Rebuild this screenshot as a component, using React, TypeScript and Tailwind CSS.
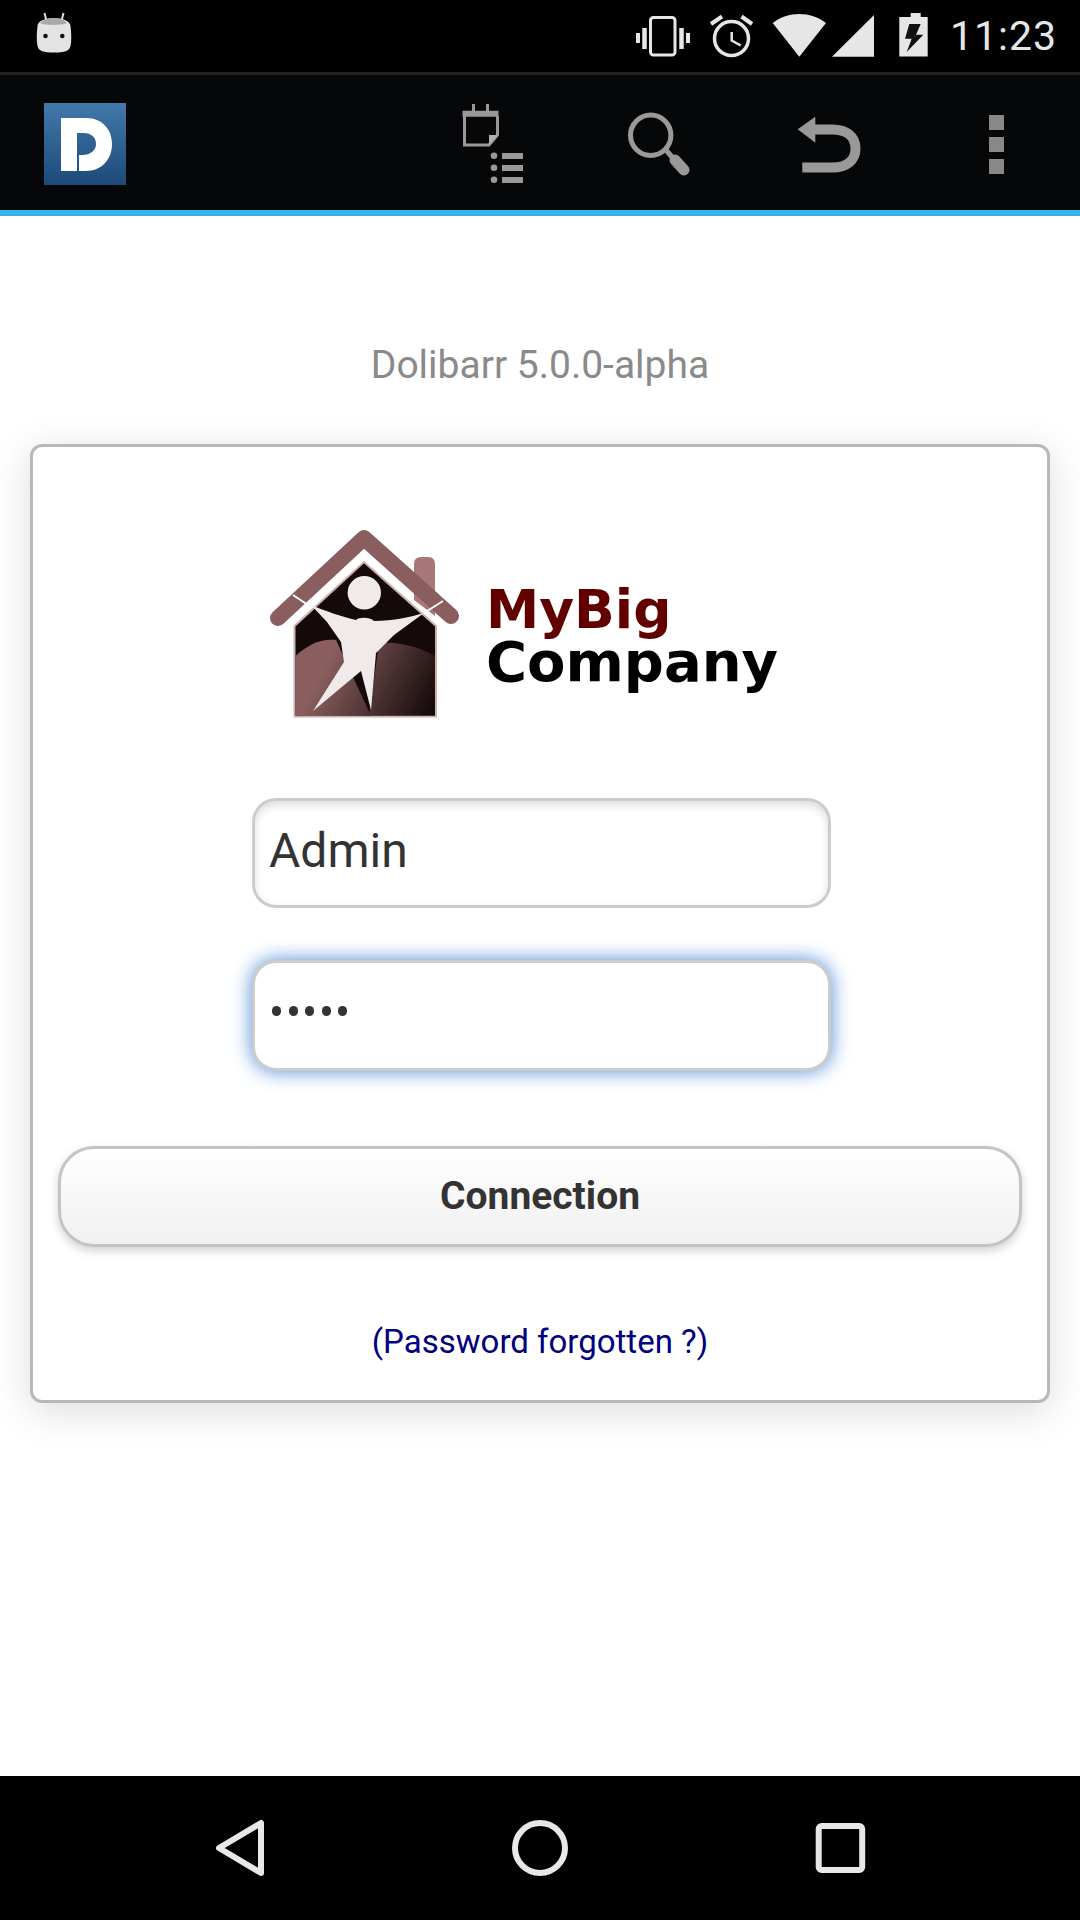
function StatusBar() {
  return (
    <div className="flex h-[72px] items-center bg-black pl-[36px] pr-[23px]">
      <svg width="40" height="56" viewBox="36 8 40 56" fill="none">
        <path d="M44.5 13l2 8M63.5 13l-2 8" stroke="#ddd" strokeWidth="2" />
        <path d="M37.5 26c0-5 8-8 16.500-8s16.500 3 16.500 8c1 8 1 15 0 20-1 5-6 6.500-16.500 6.500s-15.500-1.500-16.500-6.500c-1-5-1-12 0-20z" fill="#e3e3e3" />
        <path d="M40 23c3-3 8-5 13.500-5s11 2 13.500 5c-4 2.500-23 2.500-27 0z" fill="#a8a8a8" />
        <circle cx="45.500" cy="36" r="2.300" fill="#111" />
        <circle cx="62.300" cy="36" r="2.300" fill="#111" />
      </svg>
      <svg width="300" height="48" viewBox="630 12 300 48" fill="none" className="ml-auto">
        <rect x="650.500" y="17.500" width="24.500" height="37.500" rx="3" stroke="#e6e6e6" strokeWidth="3" />
        <path d="M644.500 28v21M681.500 28v21" stroke="#e6e6e6" strokeWidth="4.500" />
        <path d="M638 33v10M688 33v10" stroke="#e6e6e6" strokeWidth="4" />
        <circle cx="731.500" cy="38.500" r="17" stroke="#e6e6e6" strokeWidth="3.500" />
        <path d="M731.700 32v8.500l9 5" stroke="#e6e6e6" strokeWidth="2.500" />
        <path d="M711 24l11-7.500M752 24l-10.500-7.500" stroke="#e6e6e6" strokeWidth="4" />
        <path d="M772.700 23c15-12 38-12 53.300 0l-26.700 33.700z" fill="#e6e6e6" />
        <path d="M832 56.700l42-41.700v41.700z" fill="#e6e6e6" />
        <path d="M899.300 17h11.400v-4h10v4h7V56.500H899.300z" fill="#e6e6e6" />
        <path d="M909.300 24h11.400l-4.700 10.700h7.300L906.700 52l5-13.300H905z" fill="#111" />
      </svg>
      <span className="ml-[20px] text-[41px] leading-none tracking-[1px] text-[#e6e6e6]">11:23</span>
    </div>
  );
}

function ActionBar() {
  return (
    <div className="flex h-[138px] items-center border-t-[3px] border-[#222222] bg-[#050708] pl-[44px] pt-[3px]">
      <svg width="82" height="82" viewBox="0 0 82 82">
        <defs>
          <linearGradient id="dolibarr" x1="0" y1="0" x2="0" y2="1">
            <stop offset="0" stopColor="#4279ab" />
            <stop offset="1" stopColor="#1c4a78" />
          </linearGradient>
        </defs>
        <rect width="82" height="82" fill="url(#dolibarr)" />
        <path d="M17 15H42C58 15 68 26 68 41C68 57 57 68 42 68H35V52H38C47 52 52 47 52 41C52 34 47 30 40 30H33V68H17Z" fill="#ffffff" />
      </svg>
      <svg width="410" height="80" viewBox="455 104 410 80" fill="none" className="ml-[329px]">
        <path d="M473.500 111v-7M487.500 111v-7" stroke="#999" strokeWidth="3" />
        <path d="M462.500 110.700h36v6h-36z" fill="#999" />
        <path d="M464.500 116v29H489l8.500-10V116" stroke="#999" strokeWidth="3" />
        <path d="M489 145v-10h9z" fill="#b0b0b0" />
        <circle cx="494" cy="155.700" r="3.300" fill="#999" />
        <circle cx="494" cy="167.700" r="3.300" fill="#999" />
        <circle cx="494" cy="179.700" r="3.300" fill="#999" />
        <rect x="502" y="153" width="21" height="6" fill="#999" />
        <rect x="502" y="165" width="21" height="6" fill="#999" />
        <rect x="502" y="177" width="21" height="6" fill="#999" />
        <circle cx="650.700" cy="135.300" r="20.200" stroke="#999" strokeWidth="5" />
        <path d="M666 150l6 7" stroke="#999" strokeWidth="5" />
        <path d="M675 160l9 10" stroke="#999" strokeWidth="11" strokeLinecap="round" />
        <path d="M797.700 129.300l17.600-12.600v26z" fill="#999" />
        <path d="M812 129.500H832C847 129.500 855.500 137 855.500 148.500C855.500 160 847 167.500 832 167.500H802.300" stroke="#999" strokeWidth="10" />
      </svg>
      <div className="ml-[124px] flex flex-col gap-[7px]">
        <div className="h-[15px] w-[15px] bg-[#888888]" />
        <div className="h-[15px] w-[15px] bg-[#888888]" />
        <div className="h-[15px] w-[15px] bg-[#888888]" />
      </div>
    </div>
  );
}

function CompanyLogo() {
  return (
    <div className="flex items-start justify-center pr-[36px]">
      <svg width="195" height="197" viewBox="265 525 195 197">
        <defs>
          <linearGradient id="wall" gradientUnits="userSpaceOnUse" x1="325" y1="665" x2="425" y2="716">
            <stop offset="0" stopColor="#8a5e5e" />
            <stop offset="1" stopColor="#170c0c" />
          </linearGradient>
        </defs>
        <path d="M413 600v-36q0-7 7-7h7q7 0 7 7v52z" fill="#a87878" />
        <path d="M293.500 626l69.500-64 72 64v90.500H293.500z" fill="#150a0a" stroke="#cdb0b0" strokeWidth="2" />
        <path d="M294.500 715.500V656C306 645 320 638 335 640l35 76z" fill="url(#wall)" />
        <path d="M368 715.500l10-72c14-3 42 3 56 13v59z" fill="url(#wall)" />
        <path d="M277 618l86-80 87 78" fill="none" stroke="#8a5e5e" strokeWidth="16" strokeLinecap="round" strokeLinejoin="round" />
        <path d="M292 595l18 12M423 613l19-12" stroke="#ffffff" strokeWidth="2" />
        <circle cx="363.300" cy="592.700" r="16.700" fill="#f0eaea" />
        <path d="M310 605c14 6 32 12 45 15 3-3 14-3 18 1 20 0 36-4 50-8l-30 22-18 18-5 57-10-39-48 40 31-49-3-20-14-20z" fill="#f0eaea" />
      </svg>
      <div className="ml-[25px] mt-[59px] font-['DejaVu_Sans',sans-serif] font-bold">
        <div className="text-[53.5px] leading-[52px] text-[#620000]">MyBig</div>
        <div className="text-[56px] leading-[52px] text-black">Company</div>
      </div>
    </div>
  );
}

export default function App() {
  return (
    <div className="flex h-[1920px] w-[1080px] flex-col overflow-hidden bg-white font-['Roboto',sans-serif]">
      <StatusBar />
      <ActionBar />
      <div className="h-[6px] bg-[#2fb5e8]" />
      <main className="flex flex-1 flex-col items-center px-[30px]">
        <p className="mt-[127px] text-[39px] leading-[44px] text-[#8a8a8a]">Dolibarr 5.0.0-alpha</p>
        <div className="mt-[57px] flex h-[959px] w-full flex-col items-center rounded-[12px] border-[3px] border-[#b8b8b8] bg-white pt-[78px] shadow-[0_8px_40px_rgba(0,0,0,0.14)]">
          <CompanyLogo />
          <div className="ml-[3px] mt-[76px] flex h-[110px] w-[579px] items-center rounded-[24px] border-[3px] border-[#cccccc] bg-white pb-[4px] pl-[14px] text-[48px] text-[#333333] shadow-[inset_0_4px_8px_rgba(0,0,0,0.14)]">
            Admin
          </div>
          <div className="ml-[3px] mt-[52px] flex h-[111px] w-[579px] items-center gap-[7.5px] rounded-[24px] border-[3px] border-[#cccccc] bg-white pb-[10px] pl-[17px] shadow-[0_0_20px_#4f8ad6]">
            <span className="h-[10px] w-[9px] rounded-full bg-[#333333]" />
            <span className="h-[10px] w-[9px] rounded-full bg-[#333333]" />
            <span className="h-[10px] w-[9px] rounded-full bg-[#333333]" />
            <span className="h-[10px] w-[9px] rounded-full bg-[#333333]" />
            <span className="h-[10px] w-[9px] rounded-full bg-[#333333]" />
          </div>
          <button className="mt-[75px] h-[101px] w-[964px] rounded-[36px] border-[3px] border-[#c4c4c4] bg-gradient-to-b from-white to-[#f0f0f0] text-[39px] font-bold text-[#333333] shadow-[0_4px_10px_rgba(0,0,0,0.18)]">
            Connection
          </button>
          <a className="mt-[73px] text-[33px] leading-[44px] text-[#000080]">(Password forgotten ?)</a>
        </div>
      </main>
      <nav className="flex h-[144px] items-center justify-center bg-black">
        <svg width="780" height="80" viewBox="150 1808 780 80" fill="none">
          <path d="M261 1823v50l-42-25z" stroke="#e8e8e8" strokeWidth="6" strokeLinejoin="round" />
          <circle cx="540" cy="1848" r="25" stroke="#e8e8e8" strokeWidth="6" />
          <rect x="818.700" y="1826" width="43.500" height="44" rx="3" stroke="#e8e8e8" strokeWidth="6" />
        </svg>
      </nav>
    </div>
  );
}
